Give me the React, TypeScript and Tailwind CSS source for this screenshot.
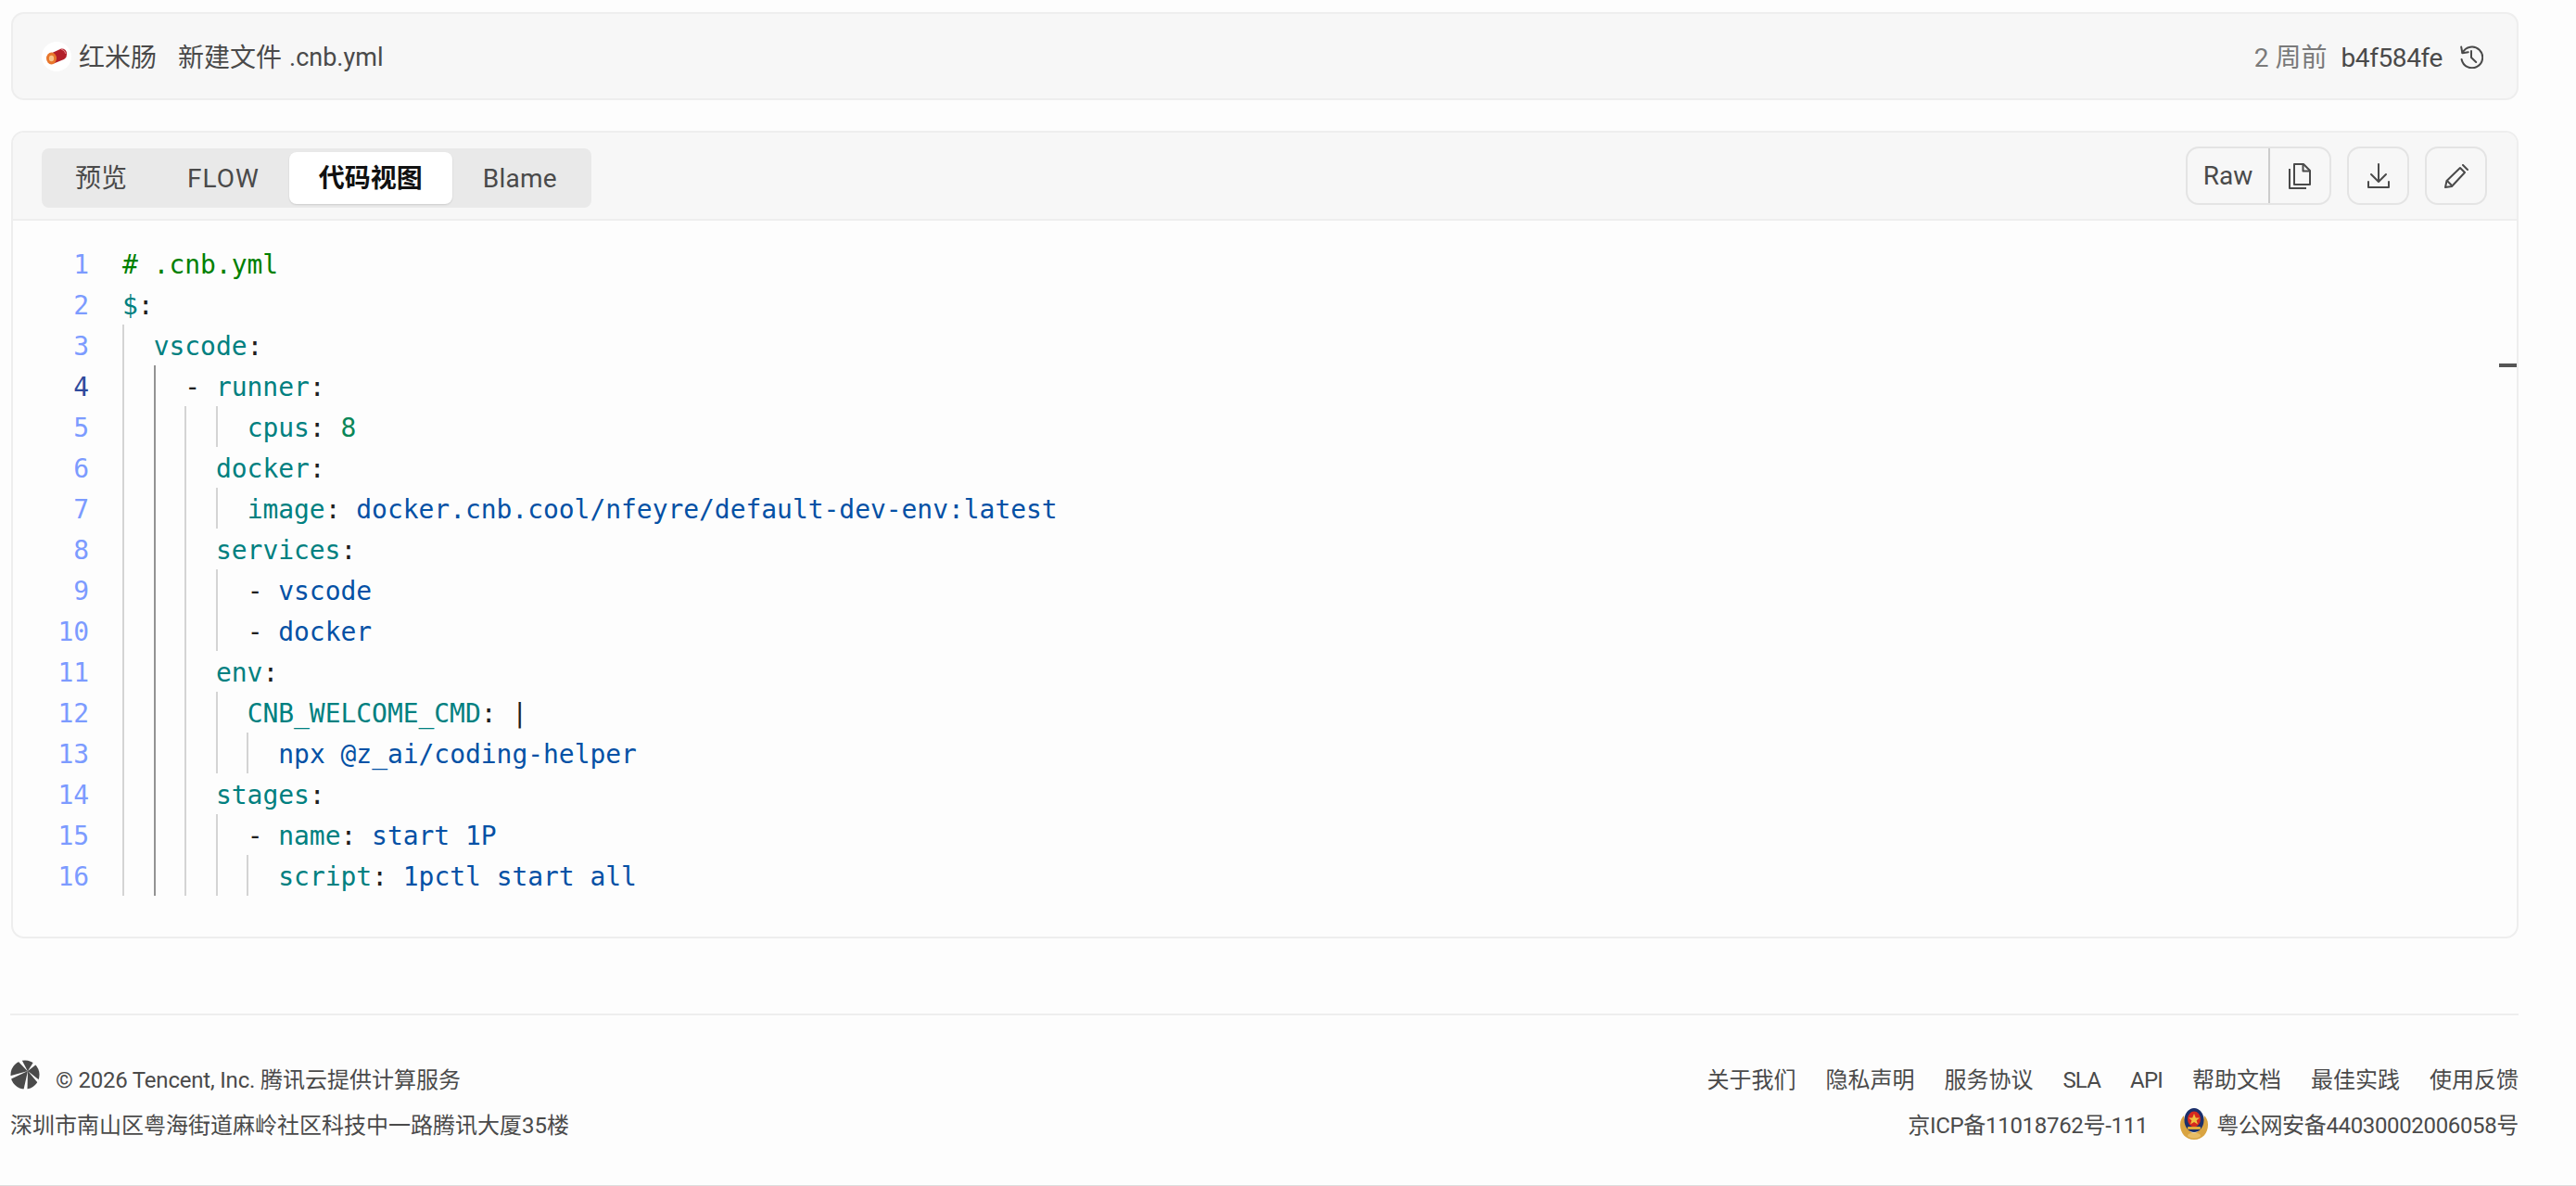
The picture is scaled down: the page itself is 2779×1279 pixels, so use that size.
import React from 'react';

const uiFont = 'font-["Roboto","Noto_Sans_CJK_SC",sans-serif]';

type Token = { t: string; c: string };

const KEY = 'text-[#008080]';
const STR = 'text-[#0451a5]';
const NUM = 'text-[#098658]';
const PUNC = 'text-[#1f1f1f]';

const key = (t: string): Token => ({ t, c: KEY });
const str = (t: string): Token => ({ t, c: STR });
const punc = (t: string): Token => ({ t, c: PUNC });

const codeLines: { indent: number; tokens: Token[]; guides: number[] }[] = [
  { indent: 0, guides: [], tokens: [{ t: '# .cnb.yml', c: 'text-[#008000]' }] },
  { indent: 0, guides: [], tokens: [key('$'), punc(':')] },
  { indent: 2, guides: [0], tokens: [key('vscode'), punc(':')] },
  { indent: 4, guides: [0, 1], tokens: [punc('- '), key('runner'), punc(':')] },
  { indent: 8, guides: [0, 1, 2, 3], tokens: [key('cpus'), punc(': '), { t: '8', c: NUM }] },
  { indent: 6, guides: [0, 1, 2], tokens: [key('docker'), punc(':')] },
  { indent: 8, guides: [0, 1, 2, 3], tokens: [key('image'), punc(': '), str('docker.cnb.cool/nfeyre/default-dev-env:latest')] },
  { indent: 6, guides: [0, 1, 2], tokens: [key('services'), punc(':')] },
  { indent: 8, guides: [0, 1, 2, 3], tokens: [punc('- '), str('vscode')] },
  { indent: 8, guides: [0, 1, 2, 3], tokens: [punc('- '), str('docker')] },
  { indent: 6, guides: [0, 1, 2], tokens: [key('env'), punc(':')] },
  { indent: 8, guides: [0, 1, 2, 3], tokens: [key('CNB_WELCOME_CMD'), punc(': |')] },
  { indent: 10, guides: [0, 1, 2, 3, 4], tokens: [str('npx @z_ai/coding-helper')] },
  { indent: 6, guides: [0, 1, 2], tokens: [key('stages'), punc(':')] },
  { indent: 8, guides: [0, 1, 2, 3], tokens: [punc('- '), key('name'), punc(': '), str('start 1P')] },
  { indent: 10, guides: [0, 1, 2, 3, 4], tokens: [key('script'), punc(': '), str('1pctl start all')] },
];

const guideLeft = ['left-0', 'left-[34px]', 'left-[67px]', 'left-[101px]', 'left-[134px]'];

const HistoryIcon = () => (
  <svg width="26" height="26" viewBox="0 0 26 26" fill="none" stroke="#4a4a4a" strokeWidth="2" strokeLinecap="round" strokeLinejoin="round">
    <path d="M3.6 8.8A11.4 11.4 0 1 1 2.6 16" />
    <path d="M2.2 2.6l1.2 6.6 6.4-1" />
    <path d="M13 7v7l5.2 5" />
  </svg>
);

const CopyIcon = () => (
  <svg width="24" height="28" viewBox="0 0 24 28" fill="none" stroke="#4a4a4a" strokeWidth="2" strokeLinejoin="round">
    <path d="M6 1h10l7 7v15H6z" />
    <path d="M15.5 1v7.5H23" />
    <path d="M1 6v21h18" />
  </svg>
);

const DownloadIcon = () => (
  <svg width="24" height="27" viewBox="0 0 24 27" fill="none" stroke="#4a4a4a" strokeWidth="2" strokeLinecap="round" strokeLinejoin="round">
    <path d="M12 1v18" />
    <path d="M4 12l8 8 8-8" />
    <path d="M1 20v6h22v-6" />
  </svg>
);

const PencilIcon = () => (
  <svg width="26" height="26" viewBox="0 0 26 26" fill="none" stroke="#4a4a4a" strokeWidth="2" strokeLinejoin="round">
    <path d="M1 25l1.5-7L17 4l5 5L8 24z" />
    <path d="M20 1l5 5" strokeLinecap="round" />
    <path d="M3 18l5 5" />
  </svg>
);

const Avatar = () => (
  <span className="w-8 h-8 rounded-full bg-white flex items-center justify-center">
    <svg width="24" height="20" viewBox="0 0 24 20">
      <path d="M5 7 L17 1.5 Q22 1 23 6 Q23.5 11 20 13 L9 17.5 Z" fill="#b3202a" />
      <path d="M17 2 Q21 3 22 7" stroke="#e88a8f" strokeWidth="1" fill="none" />
      <ellipse cx="6.5" cy="12" rx="5.5" ry="6.5" fill="#e8762c" />
      <ellipse cx="6.5" cy="12" rx="2.6" ry="3.2" fill="#f6c48a" />
    </svg>
  </span>
);

const Logo = () => (
  <svg width="32" height="32" viewBox="0 0 32 32">
    <circle cx="16" cy="16" r="15.5" fill="#4a4a4a" />
    <g fill="#fdfdfd">
      <path d="M19 12.5 L8.5 1.5 L12.5 0 Z" />
      <path d="M19 12 L-1 17.5 L0 21 Z" />
      <path d="M19 12 L14.5 32 L18.5 32 Z" />
      <path d="M19 12 L31 21.5 L30 25 Z" />
      <path d="M19 12 L25 2.5 L28 5 Z" />
    </g>
  </svg>
);

const PoliceBadge = () => (
  <svg width="30" height="34" viewBox="0 0 30 34">
    <path d="M15 34 C6 34 0 27 0 18 C0 13 2 10 4 8 C5 14 9 27 15 27 C21 27 25 14 26 8 C28 10 30 13 30 18 C30 27 24 34 15 34Z" fill="#d9a441" />
    <ellipse cx="15" cy="13" rx="10.5" ry="13" fill="#1b2f6b" />
    <ellipse cx="15" cy="12" rx="7" ry="8.5" fill="#d5281f" />
    <path d="M15 6 L16.8 10.4 L21 10.4 L17.6 13.2 L19 17.5 L15 15 L11 17.5 L12.4 13.2 L9 10.4 L13.2 10.4Z" fill="#f0c040" />
    <rect x="8" y="20" width="14" height="3" rx="1" fill="#e0a93a" />
    <ellipse cx="15" cy="29.5" rx="7" ry="3" fill="#e8bd66" />
  </svg>
);

const tabs = ['预览', 'FLOW', '代码视图', 'Blame'];

const App: React.FC = () => (
  <div className={`h-[1279px] border-b border-[#dddddd] bg-[#fdfdfd] text-[#4a4a4a] ${uiFont} pl-3 pr-[62px] pt-[13px]`}>
    <div className="h-[95px] rounded-[14px] border-2 border-[#eeeeee] bg-[#f7f7f7] pl-[31px] pr-9 flex items-center justify-between">
      <div className="flex items-center text-[28px] leading-none">
        <Avatar />
        <span className="ml-2 mt-1">红米肠</span>
        <span className="ml-[23px] mt-1">新建文件</span>
        <span className="ml-2 mt-1 text-[27px]">.cnb.yml</span>
      </div>
      <div className="flex items-center text-[28px] leading-none">
        <span className="text-[#7a7a7a] mt-1">2 周前</span>
        <span className="ml-[15px] mt-1 tracking-[-0.4px]">b4f584fe</span>
        <span className="ml-[18px] flex"><HistoryIcon /></span>
      </div>
    </div>

    <div className="mt-[33px] h-[871px] rounded-[14px] border-2 border-[#eeeeee] relative overflow-hidden">
      <div className="h-[95px] border-b-2 border-[#eeeeee] bg-[#f7f7f7] pl-[31px] pr-[32px] pt-[17px] flex items-start justify-between">
        <div className="h-16 rounded-lg bg-[#e9e9e9] px-1 flex items-center text-[28px] leading-none w-[593px]">
          {tabs.map((tab) =>
            tab === '代码视图' ? (
              <span key={tab} className="h-14 w-[176px] ml-8 pt-0.5 rounded-lg bg-white shadow-[0_1px_2px_rgba(0,0,0,0.12)] flex items-center justify-center font-bold text-[#111111]">
                {tab}
              </span>
            ) : (
              <span key={tab} className={`pt-0.5 ${tab === '预览' ? 'ml-8' : tab === 'FLOW' ? 'ml-[65px] tracking-[1px]' : 'ml-[33px] tracking-[0.2px]'}`}>
                {tab}
              </span>
            ),
          )}
        </div>
        <div className="flex items-center gap-[17px] -mt-0.5">
          <div className="h-[63px] w-[157px] rounded-[14px] border-2 border-[#e4e4e4] flex items-center">
            <span className="w-[89px] h-full flex items-center justify-center border-r-2 border-[#cccccc] text-[28px] leading-none">Raw</span>
            <span className="flex-1 flex items-center justify-center"><CopyIcon /></span>
          </div>
          <div className="h-[63px] w-[67px] rounded-[14px] border-2 border-[#e4e4e4] flex items-center justify-center"><DownloadIcon /></div>
          <div className="h-[63px] w-[67px] rounded-[14px] border-2 border-[#e4e4e4] flex items-center justify-center"><PencilIcon /></div>
        </div>
      </div>

      <div className='pt-6 font-["DejaVu_Sans_Mono",monospace] text-[28px] leading-[44px] tracking-[-0.05px]'>
        {codeLines.map((line, i) => (
          <div key={i} className="h-11 flex whitespace-pre">
            <span className={`w-[82px] text-right shrink-0 relative top-0.5 ${i === 3 ? 'text-[#2f4a9c]' : 'text-[#7c9bff]'}`}>{i + 1}</span>
            <div className="relative ml-9 flex-1">
              {line.guides.map((g) => (
                <span key={g} className={`absolute top-0 bottom-0 w-0.5 ${guideLeft[g]} ${g === 1 && i >= 3 ? 'bg-[#939393]' : 'bg-[#d4d4d4]'}`} />
              ))}
              <span className="relative top-0.5" style={{ paddingLeft: line.indent * 16.83 }}>
                {line.tokens.map((tok, j) => (
                  <span key={j} className={tok.c}>{tok.t}</span>
                ))}
              </span>
            </div>
          </div>
        ))}
      </div>

      <span className="absolute right-0 top-[249px] w-[19px] h-1 bg-[#555555]" />
    </div>

    <div className="mt-[81px] border-t-2 border-[#eeeeee] -ml-px pt-12 text-2xl leading-none">
      <div className="flex items-start justify-between h-8">
        <div className="flex items-start">
          <Logo />
          <span className="ml-[17px] mt-2.5"><span className="tracking-[-0.2px]">© 2026 Tencent, Inc. </span>腾讯云提供计算服务</span>
        </div>
        <div className="flex items-center gap-8 mt-2.5">
          {['关于我们', '隐私声明', '服务协议', 'SLA', 'API', '帮助文档', '最佳实践', '使用反馈'].map((item) => (
            <span key={item} className={item === 'SLA' || item === 'API' ? 'tracking-[-0.8px]' : ''}>{item}</span>
          ))}
        </div>
      </div>
      <div className="flex items-center justify-between mt-5 h-[34px]">
        <span className="mt-1">深圳市南山区粤海街道麻岭社区科技中一路腾讯大厦35楼</span>
        <div className="flex items-center">
          <span className="mt-1 tracking-[-0.3px]">京ICP备11018762号-111</span>
          <span className="ml-[35px] flex"><PoliceBadge /></span>
          <span className="ml-[9px] mt-1 tracking-[-0.35px]">粤公网安备44030002006058号</span>
        </div>
      </div>
    </div>
  </div>
);

export default App;
